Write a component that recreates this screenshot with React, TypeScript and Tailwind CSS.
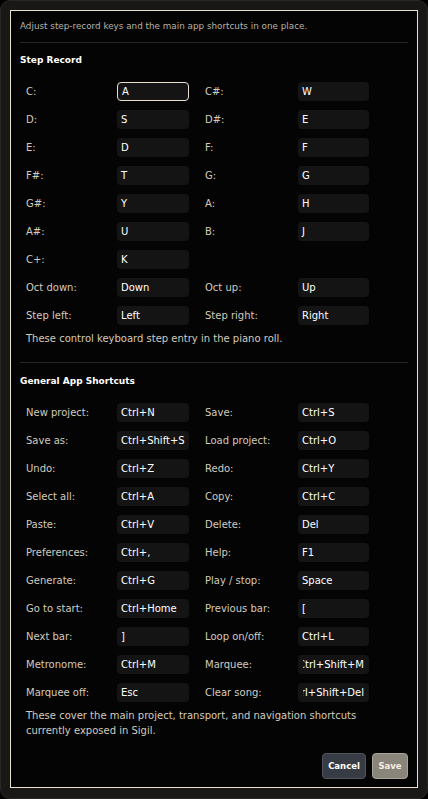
const stepRows: [string, string, string?, string?][] = [
  ['C:', 'A', 'C#:', 'W'],
  ['D:', 'S', 'D#:', 'E'],
  ['E:', 'D', 'F:', 'F'],
  ['F#:', 'T', 'G:', 'G'],
  ['G#:', 'Y', 'A:', 'H'],
  ['A#:', 'U', 'B:', 'J'],
  ['C+:', 'K'],
  ['Oct down:', 'Down', 'Oct up:', 'Up'],
  ['Step left:', 'Left', 'Step right:', 'Right'],
];

const appRows: [string, string, string, string][] = [
  ['New project:', 'Ctrl+N', 'Save:', 'Ctrl+S'],
  ['Save as:', 'Ctrl+Shift+S', 'Load project:', 'Ctrl+O'],
  ['Undo:', 'Ctrl+Z', 'Redo:', 'Ctrl+Y'],
  ['Select all:', 'Ctrl+A', 'Copy:', 'Ctrl+C'],
  ['Paste:', 'Ctrl+V', 'Delete:', 'Del'],
  ['Preferences:', 'Ctrl+,', 'Help:', 'F1'],
  ['Generate:', 'Ctrl+G', 'Play / stop:', 'Space'],
  ['Go to start:', 'Ctrl+Home', 'Previous bar:', '['],
  ['Next bar:', ']', 'Loop on/off:', 'Ctrl+L'],
  ['Metronome:', 'Ctrl+M', 'Marquee:', 'Ctrl+Shift+M'],
  ['Marquee off:', 'Esc', 'Clear song:', 'Ctrl+Shift+Del'],
];

// values too long for the box show their tail, like a scrolled line edit
const scrolled = ['Ctrl+Shift+M', 'Ctrl+Shift+Del'];

function KeyBox({ value, focused }: { value: string; focused?: boolean }) {
  const tail = scrolled.includes(value);
  return (
    <div
      className={`flex h-[19px] items-center overflow-hidden rounded-[4px] bg-[#141414] text-white ${
        focused ? 'border border-[#e8dfcf] px-[4px]' : tail ? 'px-[5px]' : 'pl-[4px]'
      }`}
    >
      <div className={`flex min-w-0 flex-1 whitespace-nowrap ${tail ? 'justify-end overflow-hidden' : ''}`}>
        <span className="shrink-0">{value}</span>
      </div>
    </div>
  );
}

function ShortcutGrid({ rows, focusFirst }: { rows: [string, string, string?, string?][]; focusFirst?: boolean }) {
  return (
    <div className="ml-[6px] grid grid-cols-[91px_88px_93px_71px] gap-y-[9px]">
      {rows.map((r, i) => (
        <div key={i} className="contents">
          <div className="flex h-[19px] items-center text-[#d2cbbd]">{r[0]}</div>
          <div className="w-[72px]">
            <KeyBox value={r[1]} focused={focusFirst && i === 0} />
          </div>
          <div className="flex h-[19px] items-center text-[#d2cbbd]">{r[2] ?? ''}</div>
          <div>{r[3] ? <KeyBox value={r[3]} /> : null}</div>
        </div>
      ))}
    </div>
  );
}

export default function App() {
  return (
    <div
      className="h-[799px] w-[428px] bg-black text-[10px] leading-[15px]"
      style={{ fontFamily: '"DejaVu Sans", Verdana, sans-serif' }}
    >
      <div className="h-full rounded-[10px] border border-[#2a2825] bg-[#191816] px-[9px] pb-[10px] pt-[9px]">
        <div className="flex h-full flex-col border border-[#e8dfcf] bg-[#040404] px-[9px] pb-[8px] pt-[8px]">
          <p className="text-[8.8px] text-[#b9b2a5]">Adjust step-record keys and the main app shortcuts in one place.</p>
          <div className="mt-[8px] h-px bg-[#262626]" />

          <h2 className="mt-[10px] text-[9px] font-bold text-white">Step Record</h2>
          <div className="mt-[14px]">
            <ShortcutGrid rows={stepRows} focusFirst />
          </div>
          <p className="ml-[6px] mt-[6px] text-[#d2cbbd]">These control keyboard step entry in the piano roll.</p>

          <div className="mt-[16px] h-px bg-[#262626]" />

          <h2 className="mt-[11px] text-[9px] font-bold text-white">General App Shortcuts</h2>
          <div className="mt-[14px]">
            <ShortcutGrid rows={appRows} />
          </div>
          <p className="ml-[6px] mt-[6px] pr-[40px] text-[#d2cbbd]">
            These cover the main project, transport, and navigation shortcuts currently exposed in Sigil.
          </p>

          <div className="mt-auto flex justify-end gap-[6px]">
            <button className="h-[26px] w-[44px] rounded-[4px] border border-[#50555e] bg-[#363b44] text-[8.5px] font-bold text-white">
              Cancel
            </button>
            <button className="h-[26px] w-[36px] rounded-[4px] border border-[#a8a397] bg-[#8a857a] text-[8.5px] font-bold text-[#f2eee6]">
              Save
            </button>
          </div>
        </div>
      </div>
    </div>
  );
}
